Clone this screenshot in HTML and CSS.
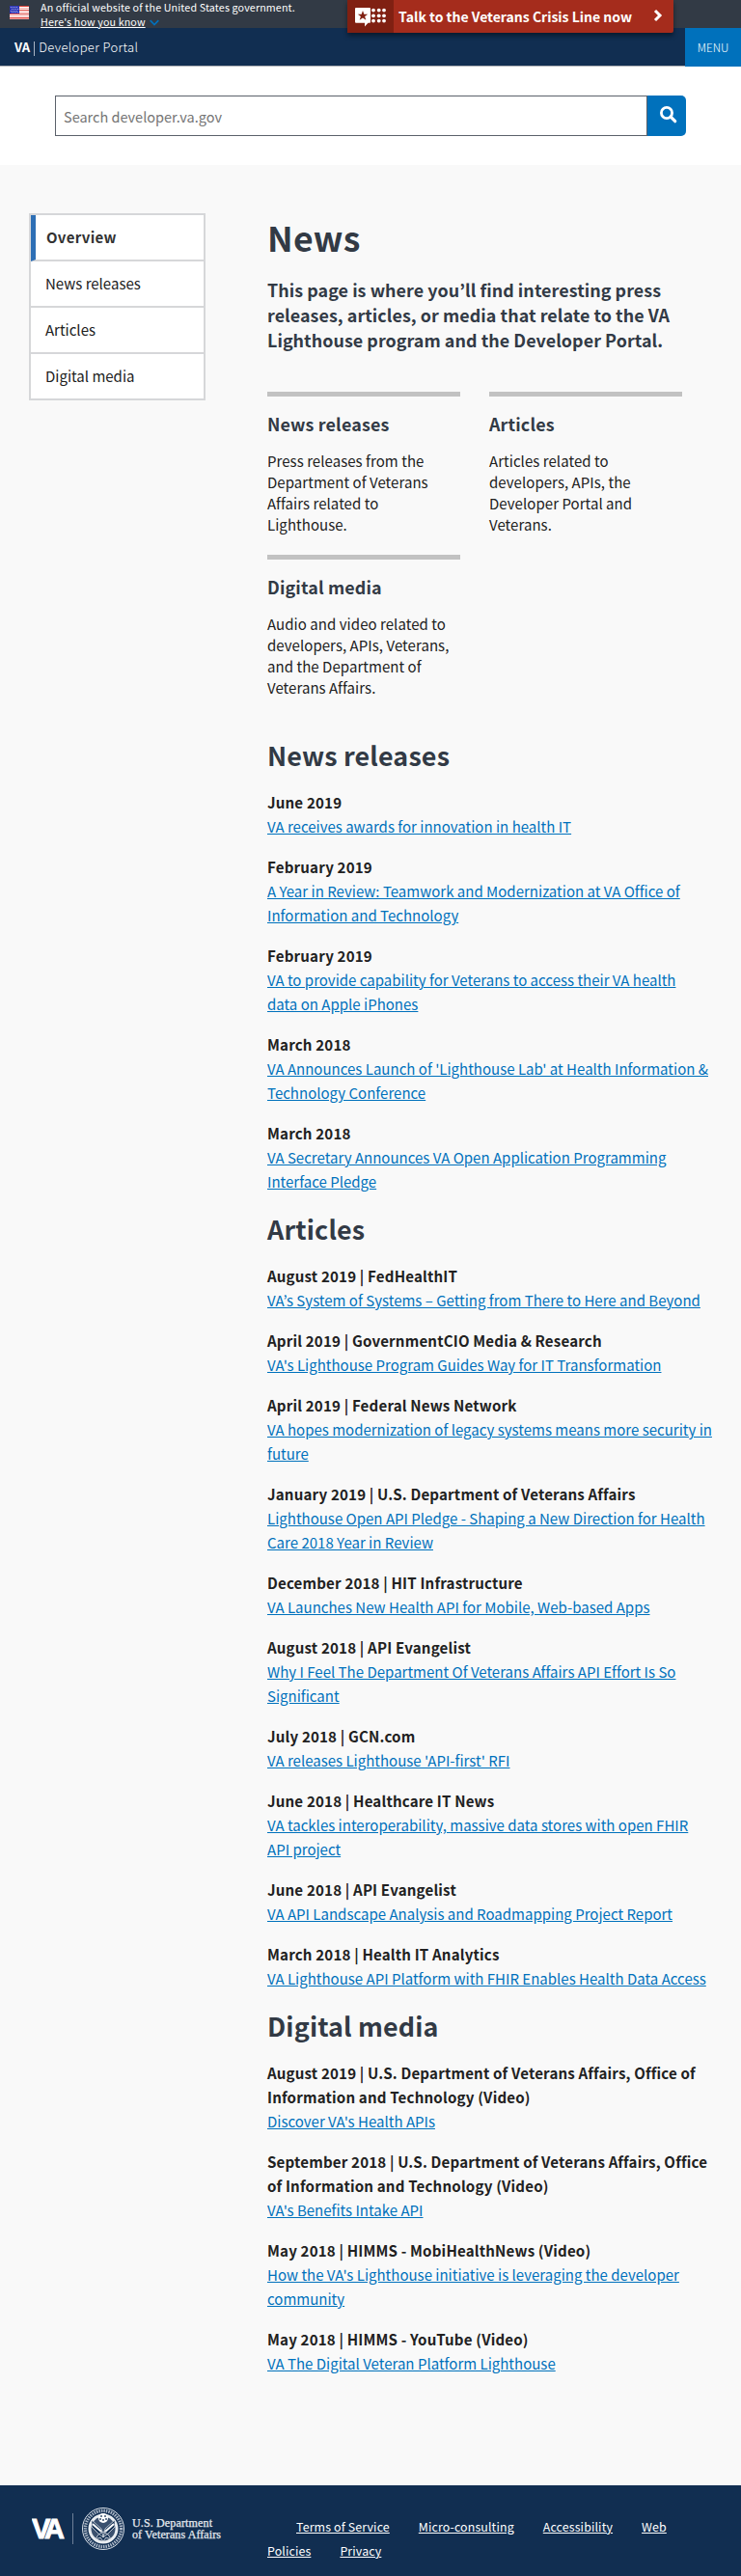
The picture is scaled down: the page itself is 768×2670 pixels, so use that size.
FILE: index.html
```html
<!DOCTYPE html>
<html lang="en">
<head>
<meta charset="utf-8">
<title>News | VA Developer Portal</title>
<link rel="stylesheet" href="styles.css">
</head>
<body>
<div class="banner">
  <svg class="flag" width="20" height="14" viewBox="0 0 20 14">
    <rect width="20" height="14" fill="#fff"/>
    <path d="M0 .5h20M0 4.500h20M0 8.500h20M0 12.500h20" stroke="#db3e36" stroke-width="1"/>
    <path d="M0 2.500h20M0 6.500h20M0 10.500h20M0 13.500h20" stroke="#f3a9a4" stroke-width="1"/>
    <rect width="10" height="8" fill="#2d36b8"/>
    <path d="M1 1.500h8M2 3.500h7M1 5.500h8M2 7h7" stroke="#a9aee4" stroke-width="1" stroke-dasharray="1 1"/>
  </svg>
  <div class="banner-text">
    <div>An official website of the United States government.</div>
    <a href="#">Here's how you know</a><svg class="caret" width="10" height="7" viewBox="0 0 10 7"><path d="M.7 1.2L5 5.5 9.3 1.2" fill="none" stroke="#0071bc" stroke-width="1.7"/></svg>
  </div>
  <a class="crisis" href="#">
    <span class="crisis-icon">
      <svg width="32" height="20" viewBox="0 0 32 20">
        <path d="M1 0h14q1 0 1 1v14q0 .8-1 .8h-1.500L10 19.500V15.800H1q-1 0-1-1V1q0-1 1-1z" fill="#fff"/>
        <path d="M8 3l1.300 3.700h3.900L10.100 9l1.200 3.800L8 10.500l-3.300 2.300L5.900 9 2.800 6.700h3.900z" fill="#802012"/>
        <g fill="#fff"><circle cx="19" cy="2.600" r="1.900"/><circle cx="24.700" cy="2.600" r="1.900"/><circle cx="30" cy="2.600" r="1.900"/><circle cx="19" cy="8.300" r="1.900"/><circle cx="24.700" cy="8.300" r="1.900"/><circle cx="30" cy="8.300" r="1.900"/><circle cx="19" cy="13.600" r="1.900"/><circle cx="24.700" cy="13.600" r="1.900"/><circle cx="30" cy="13.600" r="1.900"/></g>
      </svg>
    </span>
    <span class="crisis-label">Talk to the Veterans Crisis Line now</span>
    <svg class="crisis-arrow" width="10" height="14" viewBox="0 0 10 14"><path d="M2 2l5 5-5 5" fill="none" stroke="#fff" stroke-width="3"/></svg>
  </a>
</div>
<header class="header">
  <a class="brand" href="#"><b>VA</b><i class="bar"></i><span>Developer Portal</span></a>
  <button class="menu">MENU</button>
</header>
<div class="search">
  <input class="search-input" type="text" placeholder="Search developer.va.gov">
  <button class="search-button" aria-label="Search"><svg width="18" height="18" viewBox="0 0 18 18"><circle cx="7" cy="7" r="5.600" fill="none" stroke="#fff" stroke-width="2.800"/><path d="M11.200 11.200l4.500 4.500" stroke="#fff" stroke-width="3.200" stroke-linecap="round"/></svg></button>
</div>
<div class="page">
  <nav class="sidenav">
    <a class="current" href="#">Overview</a>
    <a href="#">News releases</a>
    <a href="#">Articles</a>
    <a href="#">Digital media</a>
  </nav>
  <main class="main">
    <h1>News</h1>
    <p class="intro">This page is where you’ll find interesting press<br>releases, articles, or media that relate to the VA<br>Lighthouse program and the Developer Portal.</p>
    <div class="cards">
      <section class="card"><h3>News releases</h3><p>Press releases from the<br>Department of Veterans<br>Affairs related to<br>Lighthouse.</p></section>
      <section class="card"><h3>Articles</h3><p>Articles related to<br>developers, APIs, the<br>Developer Portal and<br>Veterans.</p></section>
      <section class="card"><h3>Digital media</h3><p>Audio and video related to<br>developers, APIs, Veterans,<br>and the Department of<br>Veterans Affairs.</p></section>
    </div>
    <h2>News releases</h2>
    <div class="item"><b>June 2019</b><a href="#">VA receives awards for innovation in health IT</a></div>
    <div class="item"><b>February 2019</b><a href="#">A Year in Review: Teamwork and Modernization at VA Office of<br>Information and Technology</a></div>
    <div class="item"><b>February 2019</b><a href="#">VA to provide capability for Veterans to access their VA health<br>data on Apple iPhones</a></div>
    <div class="item"><b>March 2018</b><a href="#">VA Announces Launch of 'Lighthouse Lab' at Health Information &amp;<br>Technology Conference</a></div>
    <div class="item"><b>March 2018</b><a href="#">VA Secretary Announces VA Open Application Programming<br>Interface Pledge</a></div>
    <h2>Articles</h2>
    <div class="item"><b>August 2019 | FedHealthIT</b><a href="#">VA’s System of Systems – Getting from There to Here and Beyond</a></div>
    <div class="item"><b>April 2019 | GovernmentCIO Media &amp; Research</b><a href="#">VA's Lighthouse Program Guides Way for IT Transformation</a></div>
    <div class="item"><b>April 2019 | Federal News Network</b><a href="#">VA hopes modernization of legacy systems means more security in<br>future</a></div>
    <div class="item"><b>January 2019 | U.S. Department of Veterans Affairs</b><a href="#">Lighthouse Open API Pledge - Shaping a New Direction for Health<br>Care 2018 Year in Review</a></div>
    <div class="item"><b>December 2018 | HIT Infrastructure</b><a href="#">VA Launches New Health API for Mobile, Web-based Apps</a></div>
    <div class="item"><b>August 2018 | API Evangelist</b><a href="#">Why I Feel The Department Of Veterans Affairs API Effort Is So<br>Significant</a></div>
    <div class="item"><b>July 2018 | GCN.com</b><a href="#">VA releases Lighthouse 'API-first' RFI</a></div>
    <div class="item"><b>June 2018 | Healthcare IT News</b><a href="#">VA tackles interoperability, massive data stores with open FHIR<br>API project</a></div>
    <div class="item"><b>June 2018 | API Evangelist</b><a href="#">VA API Landscape Analysis and Roadmapping Project Report</a></div>
    <div class="item"><b>March 2018 | Health IT Analytics</b><a href="#">VA Lighthouse API Platform with FHIR Enables Health Data Access</a></div>
    <h2>Digital media</h2>
    <div class="item"><b>August 2019 | U.S. Department of Veterans Affairs, Office of<br>Information and Technology (Video)</b><a href="#">Discover VA's Health APIs</a></div>
    <div class="item"><b>September 2018 | U.S. Department of Veterans Affairs, Office<br>of Information and Technology (Video)</b><a href="#">VA's Benefits Intake API</a></div>
    <div class="item"><b>May 2018 | HIMMS - MobiHealthNews (Video)</b><a href="#">How the VA's Lighthouse initiative is leveraging the developer<br>community</a></div>
    <div class="item"><b>May 2018 | HIMMS - YouTube (Video)</b><a href="#">VA The Digital Veteran Platform Lighthouse</a></div>
  </main>
</div>
<footer class="footer">
  <div class="logo">
    <svg width="200" height="46" viewBox="0 0 200 46">
      <text class="logo-va" x="0" y="33" textLength="34">VA</text>
      <path d="M42.500 7v32" stroke="#6d7f98"/>
      <circle cx="74" cy="23" r="21.500" fill="none" stroke="#dbe1e8" stroke-width="1"/>
      <circle cx="74" cy="23" r="18.600" fill="none" stroke="#aab6c6" stroke-width="3.400" stroke-dasharray="1.500 1"/>
      <circle cx="74" cy="23" r="15.500" fill="#e9edf1"/>
      <circle cx="74" cy="23" r="12.500" fill="#3a506e"/>
      <path d="M62 14l10 9 2 9-5-4-7-7zM86 14l-10 9-2 9 5-4 7-7zM69 29l5-3 5 3 3 5-5-2-3 4-3-4-5 2z" fill="#112e51" stroke="#dfe5eb" stroke-width=".8"/>
      <path d="M63 18l9 8M85 18l-9 8" stroke="#fff" stroke-width="2"/>
      <circle cx="74" cy="12" r="5" fill="#fff"/>
      <g fill="#3a506e"><circle cx="72" cy="10" r="1"/><circle cx="76" cy="10" r="1"/><circle cx="71" cy="13" r="1"/><circle cx="74" cy="14" r="1"/><circle cx="77" cy="13" r="1"/></g>
      <text class="logo-dept" x="104" y="21" textLength="83">U.S. Department</text>
      <text class="logo-dept" x="104" y="33" textLength="92">of Veterans Affairs</text>
    </svg>
  </div>
  <div class="footer-links">
    <div class="row first"><a href="#">Terms of Service</a><a href="#">Micro-consulting</a><a href="#">Accessibility</a><a href="#">Web</a></div>
    <div class="row"><a href="#">Policies</a><a href="#">Privacy</a></div>
  </div>
</footer>
</body>
</html>
```

FILE: styles.css
```css
* { box-sizing: border-box; }
body {
  margin: 0;
  background: #f9f9f9;
  color: #212121;
  font-family: "Noto Sans CJK KR", sans-serif;
  font-size: 15px;
  font-weight: 400;
  line-height: 25px;
  white-space: nowrap;
}
h1, h2, h3, p { margin: 0; }
a { color: #0071bc; }

.banner { position: relative; display: flex; height: 29px; padding-left: 10px; background: #323a45; color: #fff; font-size: 10.7px; letter-spacing: .14px; line-height: 15px; }
.flag { margin: 6px 12px 0 0; }
.banner a { color: #fff; }
.caret { margin-left: 4px; }
.banner .crisis { position: absolute; left: 360px; top: 0; z-index: 2; display: flex; width: 338px; height: 34px; background: #a52c1c; border-radius: 0 0 2px 2px; box-shadow: 0 3px 5px rgba(0,0,0,.45); text-decoration: none; font-size: 14px; font-weight: 700; letter-spacing: 0; line-height: 34px; }
.crisis-icon { width: 48px; padding: 8px; background: #802012; line-height: 0; }
.crisis-label { flex: 1; padding-left: 5px; }
.crisis-arrow { margin: 9px 11px 0 0; }

.header { display: flex; justify-content: space-between; height: 40px; background: linear-gradient(#112e51 39px, #aeb0b5 39px); }
.brand { display: flex; padding: 8px 0 0 15px; color: #fff; font-size: 13px; line-height: 24px; text-decoration: none; }
.bar { width: 1px; height: 15px; margin: 6px 4px 0; background: #aab5c3; }
.brand span { font-weight: 300; letter-spacing: .35px; }
.menu { width: 58px; height: 40px; padding: 0; border: 0; background: #0071bc; color: #fff; font-family: inherit; font-size: 11.7px; font-weight: 300; line-height: 38px; }

.search { display: flex; height: 102px; padding: 30px 57px; background: #fff; }
.search-input { width: 614px; height: 42px; padding: 0 8px; border: 1px solid #5b616b; border-radius: 0; font-family: inherit; font-size: 14.5px; font-weight: 400; }
.search-input::placeholder { color: #757575; }
.search-button { width: 40px; height: 42px; padding: 0 0 0 3px; border: 0; border-radius: 0 5px 5px 0; background: #0071bc; }

.page { display: flex; gap: 64px; height: 2405px; padding: 50px 26px 0 30px; }
.sidenav { flex: none; width: 183px; height: 194px; border: 2px solid #d6d7d9; background: #fff; }
.sidenav a { display: block; height: 48px; padding-left: 15px; border-bottom: 2px solid #d6d7d9; color: #212121; line-height: 46px; text-decoration: none; }
.sidenav a:last-child { border-bottom: 0; }
.sidenav .current { padding-left: 11px; border-left: 5px solid #2e6fb5; font-weight: 700; letter-spacing: .3px; color: #323232; }

.main { flex: none; width: 465px; }
h1 { color: #323a45; font-size: 35.6px; letter-spacing: .25px; line-height: 50px; }
.intro { margin-top: 16px; color: #323a45; font-size: 17.9px; font-weight: 700; letter-spacing: .05px; line-height: 26px; }
.cards { display: grid; grid-template-columns: 200px 200px; column-gap: 30px; row-gap: 20px; margin-top: 41px; }
.card { height: 149px; border-top: 5px solid #c2c2c2; letter-spacing: .05px; }
.card h3 { margin-top: 15px; color: #323a45; font-size: 17.9px; letter-spacing: .15px; line-height: 26px; }
.card p { margin-top: 15px; line-height: 22px; }
h2 { color: #323a45; font-size: 26.9px; letter-spacing: .15px; line-height: 40px; }
.cards + h2 { margin-top: 39px; }
h2 + .item { margin-top: 16px; }
.item { margin-bottom: 17px; letter-spacing: .01px; }
.item b, .item a { display: block; }
.item b { font-size: 15.1px; letter-spacing: .17px; }

.footer { display: flex; height: 94px; background: #112e51; }
.logo { width: 277px; padding: 22px 0 0 33px; }
.logo-va { fill: #fff; stroke: #fff; stroke-width: .9px; font: 700 29px "Liberation Sans", sans-serif; }
.logo-dept { fill: #e7ebf0; stroke: #e7ebf0; stroke-width: .25px; font: 12px "Liberation Serif", serif; }
.footer-links { padding-top: 31px; font-size: 12.4px; letter-spacing: .13px; }
.row { display: flex; gap: 30px; }
.row.first { padding-left: 30px; }
.row a { color: #fff; }
```
